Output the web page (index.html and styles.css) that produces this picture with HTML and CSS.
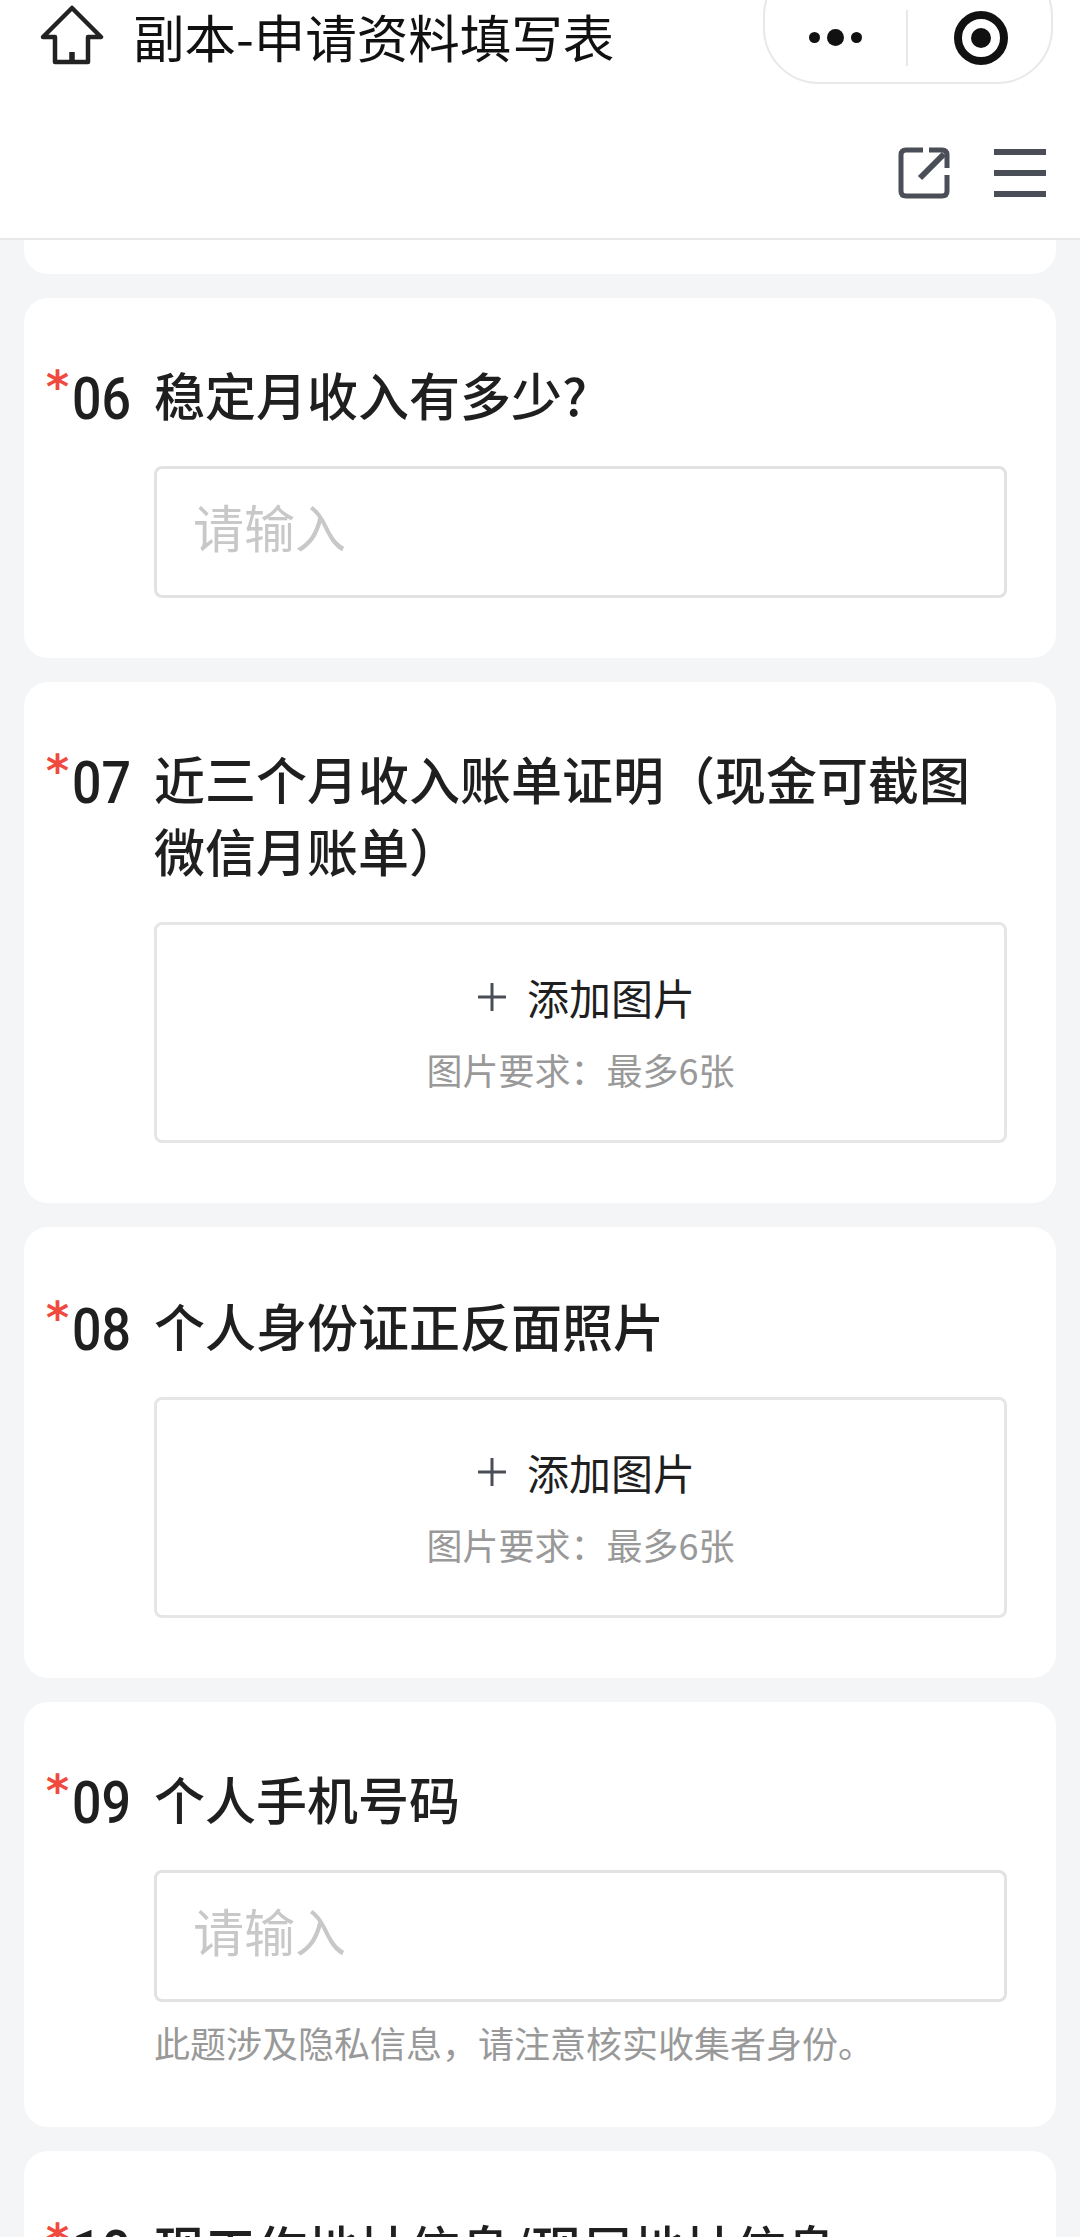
FILE: index.html
```html
<!DOCTYPE html>
<html lang="zh-CN">
<head>
    <meta charset="UTF-8">
    <title>副本-申请资料填写表</title>
    <link rel="stylesheet" href="styles.css">
</head>
<body>
    <div class="header">
        <div class="topbar">
            <svg class="home-icon" viewBox="0 0 64 62">
                <path d="M32 3 L61 32 H48 V57 H15 V32 H3 Z" fill="none" stroke="#222" stroke-width="4.5" stroke-linejoin="round"/>
                <path d="M32 47 V57" fill="none" stroke="#222" stroke-width="5.5"/>
            </svg>
            <div class="page-title">副本-申请资料填写表</div>
            <div class="capsule">
                <div class="capsule-btn">
                    <span class="dot"></span><span class="dot dot-big"></span><span class="dot"></span>
                </div>
                <div class="capsule-line"></div>
                <div class="capsule-btn capsule-btn-right">
                    <span class="record"></span>
                </div>
            </div>
        </div>
        <div class="toolbar">
            <svg class="share-icon" viewBox="0 0 52 52">
                <path d="M25 3 H8 Q3 3 3 8 V44 Q3 49 8 49 H44 Q49 49 49 44 V28" fill="none" stroke="#4a4f57" stroke-width="5"/>
                <path d="M31 3 H44 Q49 3 49 8 V21" fill="none" stroke="#4a4f57" stroke-width="5"/>
                <path d="M22 31 L46 7" fill="none" stroke="#4a4f57" stroke-width="6"/>
            </svg>
            <div class="menu-icon"><span></span><span></span><span></span></div>
        </div>
    </div>

    <div class="card card-cut"></div>

    <div class="card">
        <div class="question">
            <span class="star">*</span><span class="num"><span>06</span></span>
            <div class="q-title">稳定月收入有多少?</div>
        </div>
        <input class="answer" type="text" placeholder="请输入">
    </div>

    <div class="card">
        <div class="question">
            <span class="star">*</span><span class="num"><span>07</span></span>
            <div class="q-title">近三个月收入账单证明（现金可截图微信月账单）</div>
        </div>
        <div class="upload">
            <div class="upload-add">
                <svg class="plus-icon" viewBox="0 0 28 28">
                    <path d="M0 14 H28 M14 0 V28" stroke="#4a4f57" stroke-width="3"/>
                </svg>
                <span>添加图片</span>
            </div>
            <div class="upload-tip">图片要求：最多6张</div>
        </div>
    </div>

    <div class="card card-low">
        <div class="question">
            <span class="star">*</span><span class="num"><span>08</span></span>
            <div class="q-title">个人身份证正反面照片</div>
        </div>
        <div class="upload">
            <div class="upload-add">
                <svg class="plus-icon" viewBox="0 0 28 28">
                    <path d="M0 14 H28 M14 0 V28" stroke="#4a4f57" stroke-width="3"/>
                </svg>
                <span>添加图片</span>
            </div>
            <div class="upload-tip">图片要求：最多6张</div>
        </div>
    </div>

    <div class="card">
        <div class="question">
            <span class="star">*</span><span class="num"><span>09</span></span>
            <div class="q-title">个人手机号码</div>
        </div>
        <input class="answer" type="text" placeholder="请输入">
        <div class="hint">此题涉及隐私信息，请注意核实收集者身份。</div>
    </div>

    <div class="card">
        <div class="question">
            <span class="star">*</span><span class="num"><span>10</span></span>
            <div class="q-title">现工作地址信息/现居地址信息</div>
        </div>
    </div>
</body>
</html>
```

FILE: styles.css
```css
* {
    box-sizing: border-box;
}

html, body {
    margin: 0;
    padding: 0;
}

body {
    width: 1080px;
    height: 2237px;
    overflow: hidden;
    background-color: #f4f5f7;
    color: #1f1f1f;
    font-family: "Noto Sans CJK SC", "Noto Sans", sans-serif;
}

.header {
    height: 240px;
    background-color: #fff;
    border-bottom: 2px solid #e8e8e8;
}

.topbar {
    height: 85px;
    overflow: hidden;
    display: flex;
    padding: 0 27px 0 40px;
}

.home-icon {
    width: 64px;
    height: 62px;
    margin-top: 5px;
    flex-shrink: 0;
}

.page-title {
    margin-left: 29px;
    font-size: 51.5px;
    line-height: 72px;
    height: 72px;
    color: #111;
    flex: 1;
}

.capsule {
    width: 290px;
    height: 124px;
    margin-top: -40px;
    display: flex;
    align-items: center;
    padding-top: 40px;
    border: 2px solid #e8e8e8;
    border-radius: 56px;
}

.capsule-btn {
    flex: 1;
    display: flex;
    justify-content: center;
    align-items: center;
    gap: 7px;
    height: 72px;
    margin-top: -9px;
}

.capsule-btn-right {
    padding-left: 3px;
}

.capsule-line {
    width: 2px;
    height: 56px;
    margin-top: -9px;
    background-color: #e8e8e8;
}

.dot {
    width: 11px;
    height: 11px;
    border-radius: 50%;
    background-color: #111;
}

.dot-big {
    width: 17px;
    height: 17px;
}

.record {
    width: 54px;
    height: 54px;
    border: 8px solid #111;
    border-radius: 50%;
    display: flex;
}

.record::after {
    content: "";
    width: 20px;
    height: 20px;
    margin: auto;
    border-radius: 50%;
    background-color: #111;
}

.toolbar {
    height: 153px;
    display: flex;
    justify-content: flex-end;
    align-items: center;
    gap: 44px;
    padding: 22px 34px 0 0;
}

.share-icon {
    width: 52px;
    height: 52px;
}

.menu-icon {
    width: 52px;
    height: 48px;
    display: flex;
    flex-direction: column;
    justify-content: space-between;
}

.menu-icon span {
    height: 6px;
    background-color: #4a4f57;
}

.card {
    margin: 24px 24px 0;
    padding: 63px 48px 60px 22px;
    background-color: #fff;
    border-radius: 24px;
}

.card-cut {
    margin-top: 0;
    padding: 0;
    height: 34px;
    border-radius: 0 0 24px 24px;
}

.card-low {
    padding-top: 65px;
}

.question {
    display: flex;
    align-items: flex-start;
}

.star {
    width: 26px;
    height: 60px;
    flex-shrink: 0;
    color: #f0493e;
    font-family: "DejaVu Sans", sans-serif;
    font-size: 44px;
    font-weight: 700;
    line-height: 56px;
    margin-top: -2px;
}

.num {
    width: 82px;
    flex-shrink: 0;
    font-family: Roboto, sans-serif;
    font-size: 59px;
    font-weight: 500;
    line-height: 69px;
    margin-top: 3px;
}

.num span {
    display: inline-block;
    transform: scaleX(0.88);
    transform-origin: left center;
}

.q-title {
    flex: 1;
    font-size: 51px;
    font-weight: 500;
    line-height: 72px;
    margin-top: -3px;
    margin-bottom: 3px;
}

.answer {
    display: block;
    width: 853px;
    height: 132px;
    margin: 33px 0 0 108px;
    padding: 0 36px 13px;
    border: 3px solid #e2e2e2;
    border-radius: 8px;
    background-color: #fff;
    font-family: inherit;
    font-size: 51px;
    outline: none;
}

.answer::placeholder {
    color: #c8c8c8;
    opacity: 1;
}

.upload {
    width: 853px;
    height: 221px;
    margin: 33px 0 0 108px;
    padding-top: 44px;
    border: 3px solid #e6e6e6;
    border-radius: 8px;
    text-align: center;
}

.upload-add {
    display: flex;
    justify-content: center;
    align-items: center;
    gap: 21px;
    font-size: 42px;
    line-height: 56px;
    padding-left: 12px;
}

.plus-icon {
    width: 28px;
    height: 28px;
}

.upload-tip {
    margin-top: 19px;
    font-size: 36px;
    line-height: 50px;
    color: #999;
}

.hint {
    margin: 15px 0 0 108px;
    font-size: 36px;
    line-height: 50px;
    color: #999;
}
```
